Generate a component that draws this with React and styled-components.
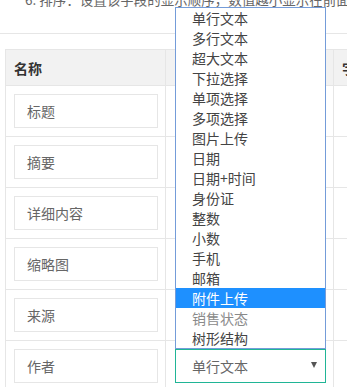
import React from "react";
import styled, { createGlobalStyle } from "styled-components";

const Global = createGlobalStyle`
  html, body { margin: 0; padding: 0; background: #fff; overflow: hidden; }
  body { font-family: "Noto Sans CJK SC", "Noto Sans", sans-serif; font-size: 14px; color: #666; }
  * { box-sizing: border-box; }
`;

const Page = styled.div`
  width: 347px;
  height: 387px;
  overflow: hidden;
`;

const Tip = styled.div`
  margin-top: -11px;
  padding-left: 25px;
  height: 45px;
  line-height: 20px;
  font-size: 13.5px;
  color: #666;
  white-space: nowrap;
  border-bottom: 1px solid #e6e6e6;
`;

const Table = styled.div`
  margin: 15px 0 0 5px;
  width: 600px;
  border-left: 1px solid #e6e6e6;
  border-top: 1px solid #e6e6e6;
`;

const Row = styled.div`
  display: grid;
  grid-template-columns: 160px 168px 1fr;
  height: ${(p) => (p.$head ? "36px" : "51px")};
  background: ${(p) => (p.$head ? "#f2f2f2" : "#fff")};
`;

const Cell = styled.div`
  border-right: 1px solid #e6e6e6;
  border-bottom: 1px solid #e6e6e6;
  padding: 8px 0 0 ${(p) => p.$pl || 8}px;
  display: flex;
  align-items: flex-start;
`;

const HeadCell = styled.div`
  border-right: 1px solid #e6e6e6;
  border-bottom: 1px solid #e6e6e6;
  padding-left: 8px;
  display: flex;
  align-items: center;
  font-weight: 700;
  color: #333;
  font-size: 14px;
  white-space: nowrap;
  overflow: hidden;
`;

const Input = styled.div`
  width: 144px;
  height: 34px;
  border: 1px solid #e6e6e6;
  padding-left: 12px;
  line-height: 32px;
  color: #666;
  font-size: 14px;
`;

const SelectWrap = styled.div`
  position: relative;
  width: 151px;
  height: 34px;
`;

const SelectBox = styled.div`
  height: 34px;
  border: 1px solid #20b596;
  padding-left: 16px;
  line-height: 32px;
  color: #666;
  font-size: 14px;
  display: flex;
  align-items: center;
  justify-content: space-between;
  padding-right: 8px;
`;

const Arrow = styled.span`
  width: 0;
  height: 0;
  border-left: 3px solid transparent;
  border-right: 3px solid transparent;
  border-top: 6px solid #555;
  margin-top: -2px;
`;

const List = styled.ul`
  position: absolute;
  left: 0;
  bottom: 100%;
  width: 100%;
  margin: 0;
  padding: 0;
  list-style: none;
  background: #fff;
  border: 1px solid #749cd9;
  z-index: 10;
`;

const Item = styled.li`
  height: 20px;
  line-height: 20px;
  padding-left: 16px;
  font-size: 14px;
  white-space: nowrap;
  color: ${(p) => (p.$active ? "#fff" : p.$dim ? "#8a8a8a" : "#444")};
  background: ${(p) => (p.$active ? "#1e90ff" : "transparent")};
`;

const options = [
  "单行文本", "多行文本", "超大文本", "下拉选择", "单项选择", "多项选择",
  "图片上传", "日期", "日期+时间", "身份证", "整数", "小数", "手机", "邮箱",
  "附件上传", "销售状态", "树形结构",
];

const names = ["标题", "摘要", "详细内容", "缩略图", "来源", "作者"];

export default function App() {
  return (
    <Page>
      <Global />
      <Tip>6. 排序：设置该字段的显示顺序，数值越小显示在前面</Tip>
      <Table>
        <Row $head>
          <HeadCell>名称</HeadCell>
          <HeadCell></HeadCell>
          <HeadCell>字段</HeadCell>
        </Row>
        {names.map((n, i) => (
          <Row key={n}>
            <Cell>
              <Input>{n}</Input>
            </Cell>
            <Cell $pl={9}>
              {i === names.length - 1 && (
                <SelectWrap>
                  <List>
                    {options.map((o) => (
                      <Item key={o} $active={o === "附件上传"} $dim={o === "销售状态"}>
                        {o}
                      </Item>
                    ))}
                  </List>
                  <SelectBox>
                    单行文本
                    <Arrow />
                  </SelectBox>
                </SelectWrap>
              )}
            </Cell>
            <Cell />
          </Row>
        ))}
      </Table>
    </Page>
  );
}
